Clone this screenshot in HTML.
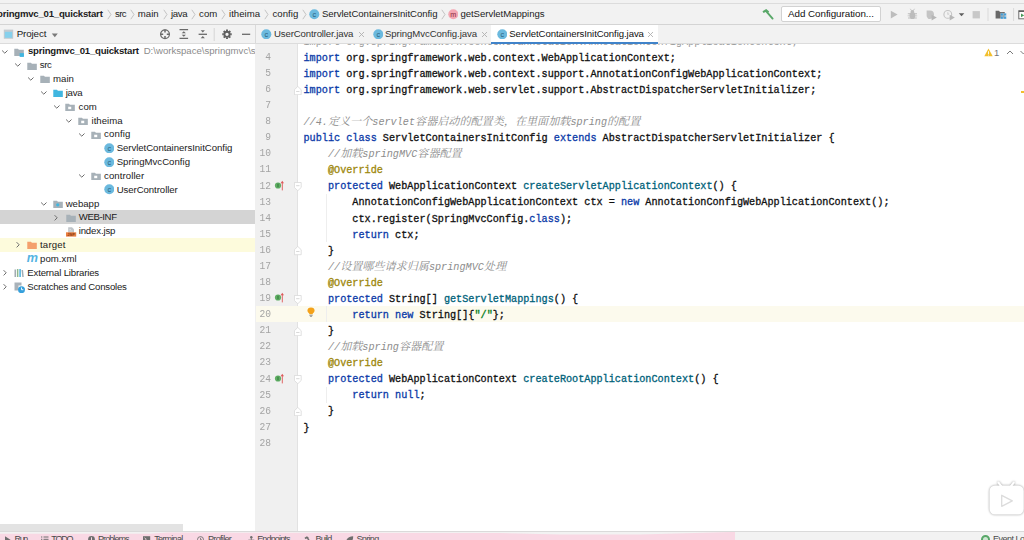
<!DOCTYPE html>
<html><head><meta charset="utf-8"><title>springmvc_01_quickstart</title>
<style>
*{box-sizing:border-box;margin:0;padding:0}
html,body{width:1024px;height:540px;overflow:hidden;background:#fff}
body{position:relative;font-family:"Liberation Sans","Noto Sans CJK SC",sans-serif;font-size:9.6px;color:#1a1a1a}
.abs{position:absolute}
.b{font-weight:bold}
.g{color:#8c8c8c}
#top0{left:0;top:0;width:1024px;height:4px;background:#f2f2f2;border-bottom:1px solid #dcdcdc;z-index:5}
#nav{left:0;top:4px;width:1024px;height:21px;background:#f2f2f2;border-bottom:1px solid #d4d4d4;z-index:5;overflow:hidden}
#nav span{position:absolute;top:0;line-height:20px;white-space:nowrap;font-size:9.6px;color:#222}
#nav .btn{background:#fff;border:1px solid #d2d2d2;border-radius:2px}
#nav span.btnt{color:#111;font-size:9.8px}
#tb{left:0;top:25px;width:1024px;height:19px;background:#f2f2f2;z-index:5;overflow:hidden}
#tb span{position:absolute;top:0;line-height:18px;white-space:nowrap}
#tb span.tab{color:#333;font-size:9.6px}
#left{left:0;top:44px;width:255px;height:487px;background:#fff}
.row{position:absolute;left:0;width:255px;height:13.9px;line-height:14px;white-space:nowrap;overflow:hidden}
.row span{position:absolute;top:0}
#gutter{left:255px;top:44px;width:43px;height:487px;background:#f0f0f0;border-right:1px solid #e2e2e2}
#codebg{left:298px;top:44px;width:726px;height:487px;background:#fff}
#codewrap{left:0;top:0;width:1024px;height:531px;overflow:hidden}
.ln{position:absolute;left:255px;width:16px;text-align:right;font-family:"Liberation Mono",monospace;font-size:9.6px;line-height:16px;height:16px;color:#a4a4a4;transform:scaleY(1.12);transform-origin:50% 55%}
.cl{position:absolute;left:303.5px;font-family:"Liberation Mono","Noto Serif CJK SC",monospace;font-size:10.18px;line-height:16px;height:16px;white-space:pre;color:#111;-webkit-text-stroke:0.3px}
.l3,.l3 .k{color:#9a9a9a;-webkit-text-stroke:0}
.k{color:#0b3aa8}.a{color:#9e880d}.m{color:#00627a}.s{color:#067d17}
.c{color:#8c8c8c;font-style:italic;-webkit-text-stroke:0}
.cj{font-family:"Noto Serif CJK SC",serif;font-size:11.1px;line-height:0}
#status{left:0;top:531px;width:1024px;height:9px;background:#f2f2f2;overflow:hidden;border-top:1px solid #dadada;z-index:6}
#status .pink{position:absolute;left:0;top:0;width:735px;height:9px;background:#f9d8e4;clip-path:polygon(0 1.800px,150px 1.800px,168px 0.600px,500px 0.900px,560px 2.600px,640px 2.600px,731px 0,735px 0,735px 9px,0 9px)}
#status span{position:absolute;top:1.0px;font-size:9px;line-height:12px;color:#4a4a4a;white-space:nowrap}
</style></head><body>
<div id="top0" class="abs"></div>
<div id="nav" class="abs"><span class="b" style="left:-8.1px;font-size:9.6px;letter-spacing:-0.218px;">springmvc_01_quickstart</span><svg class="abs" style="left:106.5px;top:5px" width="5" height="11" viewBox="0 0 5 11"><path d="M0.8 0.8 L4 5.5 L0.8 10.2" fill="none" stroke="#b8b8b8" stroke-width="0.8"/></svg><span class="" style="left:115.0px;font-size:9.6px;letter-spacing:-0.566px;">src</span><svg class="abs" style="left:129.5px;top:5px" width="5" height="11" viewBox="0 0 5 11"><path d="M0.8 0.8 L4 5.5 L0.8 10.2" fill="none" stroke="#b8b8b8" stroke-width="0.8"/></svg><span class="" style="left:137.8px;font-size:9.6px;letter-spacing:0.026px;">main</span><svg class="abs" style="left:162.5px;top:5px" width="5" height="11" viewBox="0 0 5 11"><path d="M0.8 0.8 L4 5.5 L0.8 10.2" fill="none" stroke="#b8b8b8" stroke-width="0.8"/></svg><span class="" style="left:171.0px;font-size:9.6px;letter-spacing:-0.377px;">java</span><svg class="abs" style="left:191px;top:5px" width="5" height="11" viewBox="0 0 5 11"><path d="M0.8 0.8 L4 5.5 L0.8 10.2" fill="none" stroke="#b8b8b8" stroke-width="0.8"/></svg><span class="" style="left:199.1px;font-size:9.6px;letter-spacing:0.025px;">com</span><svg class="abs" style="left:221px;top:5px" width="5" height="11" viewBox="0 0 5 11"><path d="M0.8 0.8 L4 5.5 L0.8 10.2" fill="none" stroke="#b8b8b8" stroke-width="0.8"/></svg><span class="" style="left:229.0px;font-size:9.6px;letter-spacing:0.023px;">itheima</span><svg class="abs" style="left:264px;top:5px" width="5" height="11" viewBox="0 0 5 11"><path d="M0.8 0.8 L4 5.5 L0.8 10.2" fill="none" stroke="#b8b8b8" stroke-width="0.8"/></svg><span class="" style="left:272.4px;font-size:9.6px;letter-spacing:0.082px;">config</span><svg class="abs" style="left:301.5px;top:5px" width="5" height="11" viewBox="0 0 5 11"><path d="M0.8 0.8 L4 5.5 L0.8 10.2" fill="none" stroke="#b8b8b8" stroke-width="0.8"/></svg><svg class="abs" style="left:309.3px;top:5.0px" width="10.6" height="10.6" viewBox="0 0 11 11"><circle cx="5.5" cy="5.5" r="5.2" fill="#6bb9de"/><text x="5.5" y="8" font-family="Liberation Sans,sans-serif" font-size="7.5" text-anchor="middle" fill="#2a5f7a">c</text></svg><span class="" style="left:321.9px;font-size:9.6px;letter-spacing:-0.044px;">ServletContainersInitConfig</span><svg class="abs" style="left:441.2px;top:5px" width="5" height="11" viewBox="0 0 5 11"><path d="M0.8 0.8 L4 5.5 L0.8 10.2" fill="none" stroke="#b8b8b8" stroke-width="0.8"/></svg><svg class="abs" style="left:447.7px;top:5.0px" width="10.6" height="10.6" viewBox="0 0 11 11"><circle cx="5.5" cy="5.5" r="5.2" fill="#f4a6b2"/><text x="5.5" y="8" font-family="Liberation Sans,sans-serif" font-size="7.5" text-anchor="middle" fill="#8a2a3a">m</text></svg><span class="" style="left:460.4px;font-size:9.6px;letter-spacing:-0.039px;">getServletMappings</span><svg class="abs" style="left:761px;top:4px" width="14" height="13" viewBox="0 0 14 13"><path d="M1.5 3.2 L5.2 1 L8.2 3.6 L6.3 5.6 L4.6 4.1 L2.6 5 Z" fill="#59a869"/><path d="M6.4 4.6 L11.6 10.6" stroke="#59a869" stroke-width="1.9" stroke-linecap="round"/></svg><div class="abs btn" style="left:781px;top:2px;width:100px;height:16px"></div><span class="btnt" style="left:788.0px;font-size:9.8px;letter-spacing:-0.035px;">Add Configuration...</span><svg class="abs" style="left:888px;top:4px" width="136" height="14" viewBox="0 0 136 14"><path d="M2.800 2.700 L9.600 6.600 L2.800 10.500 Z" fill="#bdbdbd"/><g fill="#bdbdbd"><ellipse cx="24.400" cy="7.400" rx="2.900" ry="3.600"/><circle cx="24.400" cy="3.600" r="1.700"/><path d="M19.800 5.300h9.200v.9h-9.200zM19.600 7.400h9.600v.9h-9.600zM20 9.600h8.800v.9h-8.800z"/><path d="M22.300 0.800l1.300 2M26.500 0.800l-1.300 2" stroke="#bdbdbd" stroke-width="0.800" fill="none"/></g><g><path d="M38.600 2.600h3.400c2.600 0 4 1.600 4 4s-1.400 4.400-4 4.400h-1.400c-1.200-0.800-2-2.200-2-3.400z" fill="#c4c4c4"/><path d="M43.600 6.800 L48.800 9.600 L43.600 12.400Z" fill="#b6b6b6"/></g><g><circle cx="59.800" cy="6.400" r="3.900" fill="none" stroke="#c4c4c4" stroke-width="1.100"/><path d="M59.800 4.200v2.400l1.400-1" stroke="#c4c4c4" fill="none" stroke-width="0.800"/><path d="M61.700 6.800 L66.800 9.600 L61.700 12.400Z" fill="#b6b6b6"/></g><path d="M70.800 5.200 L76.300 5.200 L73.550 8.300Z" fill="#5e5e5e"/><rect x="84.600" y="3.100" width="7.300" height="7.300" fill="#c8c8c8"/><path d="M100 0v13" stroke="#dadada" stroke-width="1"/><path d="M107.600 2.800h3.400l1 1.200h4.800v6.400h-9.200z" fill="#686868"/><path d="M112.600 5.200h2.600v2.600h-2.600zM115.700 5.200h2.600v2.600h-2.600zM112.600 8.300h2.600v2.600h-2.600zM115.700 8.300h2.600v2.600h-2.600z" fill="#3d9ad6" stroke="#f2f2f2" stroke-width="0.300"/><path d="M125.600 0v13" stroke="#dadada" stroke-width="1"/><rect x="130.800" y="2.800" width="9" height="8" fill="#fff" stroke="#6c6c6c" stroke-width="1"/><path d="M130.800 3.300h9" stroke="#5e5e5e" stroke-width="1.400"/><path d="M133 5.600 L136.200 7.400 L133 9.200Z" fill="#4a9a5a"/></svg></div>
<div id="tb" class="abs"><svg class="abs" style="left:3px;top:3.5px" width="11" height="11" viewBox="0 0 11 11"><rect x="0.8" y="0.6" width="9.4" height="9.2" fill="#c3cad0"/><rect x="1.8" y="2.800" width="7.4" height="6" fill="#86d0ec"/></svg><span class="" style="left:16.7px;font-size:9.8px;letter-spacing:-0.129px;color:#222">Project</span><svg class="abs" style="left:51px;top:7.5px" width="8" height="5" viewBox="0 0 8 5"><path d="M0.8 0.6h6L3.8 4.2z" fill="#7a7a7a"/></svg><svg class="abs" style="left:159px;top:3px" width="100" height="13" viewBox="0 0 100 13" fill="none" stroke="#6a6a6a" stroke-width="1.2"><circle cx="6" cy="6.300" r="4.400"/><path d="M6 1.500v3M6 8.100v3M1.200 6.300h3M7.800 6.300h3" stroke-width="1.500"/><path d="M20.500 1.700h8.600M20.500 10.300h8.600" stroke-width="1.300"/><path d="M24.800 3.200l2.100 2.100h-4.200zM24.800 8.800l2.100-2.100h-4.200z" fill="#6a6a6a" stroke="none"/><path d="M39.600 6.300h8.400" stroke-width="1.300"/><path d="M43.800 4.600l2.100-2.300h-4.200zM43.800 8l2.100 2.300h-4.200z" fill="#6a6a6a" stroke="none"/><path d="M55.200 0v13" stroke="#d6d6d6" stroke-width="1"/><g transform="translate(68 6.300)"><circle r="2.600" stroke-width="1.900" stroke="#5e5e5e"/><g stroke-width="1.900" stroke="#5e5e5e"><path d="M0 -4.700v1.500M0 4.700v-1.500M-4.700 0h1.500M4.700 0h-1.500M-3.300 -3.300l1.050 1.050M3.300 3.300l-1.050 -1.050M-3.300 3.300l1.050 -1.050M3.300 -3.300l-1.050 1.050"/></g></g><path d="M83 6.300h8.200" stroke-width="1.300"/></svg><div class="abs" style="left:255px;top:0;width:1px;height:19px;background:#dadada"></div><svg class="abs" style="left:261px;top:3.5px" width="10.6" height="10.6" viewBox="0 0 11 11"><circle cx="5.5" cy="5.5" r="5.2" fill="#6bb9de"/><text x="5.5" y="8" font-family="Liberation Sans,sans-serif" font-size="7.5" text-anchor="middle" fill="#2a5f7a">c</text></svg><span class="tab" style="left:274.0px;font-size:9.6px;letter-spacing:-0.121px;">UserController.java</span><svg class="abs" style="left:357.7px;top:6px" width="7" height="7" viewBox="0 0 7 7"><path d="M1 1l5 5M6 1l-5 5" stroke="#b0b0b0" stroke-width="0.9"/></svg><svg class="abs" style="left:372.7px;top:3.5px" width="10.6" height="10.6" viewBox="0 0 11 11"><circle cx="5.5" cy="5.5" r="5.2" fill="#6bb9de"/><text x="5.5" y="8" font-family="Liberation Sans,sans-serif" font-size="7.5" text-anchor="middle" fill="#2a5f7a">c</text></svg><span class="tab" style="left:385.0px;font-size:9.6px;letter-spacing:-0.066px;">SpringMvcConfig.java</span><svg class="abs" style="left:481.2px;top:6px" width="7" height="7" viewBox="0 0 7 7"><path d="M1 1l5 5M6 1l-5 5" stroke="#b0b0b0" stroke-width="0.9"/></svg><div class="abs" style="left:0;top:18.300px;width:1024px;height:0.700px;background:#dcdcdc"></div><div class="abs" style="left:490.6px;top:0;width:167.600px;height:19px;background:#fff;border-bottom:2.400px solid #4083c9"></div><svg class="abs" style="left:496.5px;top:3.5px" width="10.6" height="10.6" viewBox="0 0 11 11"><circle cx="5.5" cy="5.5" r="5.2" fill="#6bb9de"/><text x="5.5" y="8" font-family="Liberation Sans,sans-serif" font-size="7.5" text-anchor="middle" fill="#2a5f7a">c</text></svg><span class="tab" style="left:509.3px;font-size:9.6px;letter-spacing:-0.077px;color:#111">ServletContainersInitConfig.java</span><svg class="abs" style="left:647.4px;top:6px" width="7" height="7" viewBox="0 0 7 7"><path d="M1 1l5 5M6 1l-5 5" stroke="#b0b0b0" stroke-width="0.9"/></svg></div>
<div id="left" class="abs"></div>
<div class="row" style="top:44.40px"><svg class="abs" style="left:0.8px;top:3.2px" width="8" height="8" viewBox="0 0 8 8"><path d="M1.1 2.500 L3.800 5.200 L6.500 2.500" fill="none" stroke="#6c6c6c" stroke-width="1"/></svg><svg class="abs" style="left:14.0px;top:2.3px" width="10.4" height="10.4" viewBox="0 0 11 11"><path d="M0.3 1.800h3.900l1 1.200h5.200v6.400h-10.100z" fill="#a7b1b8"/><rect x="6" y="6.5" width="4.5" height="4" fill="#40b6e0"/></svg><span class="b" style="left:28.0px;font-size:9.6px;letter-spacing:-0.218px;">springmvc_01_quickstart</span><span class="g" style="left:143.7px;font-size:9.6px;letter-spacing:0.001px;">D:\workspace\springmvc\s</span></div><div class="row" style="top:58.23px"><svg class="abs" style="left:14px;top:3.2px" width="8" height="8" viewBox="0 0 8 8"><path d="M1.1 2.500 L3.800 5.200 L6.500 2.500" fill="none" stroke="#6c6c6c" stroke-width="1"/></svg><svg class="abs" style="left:26.5px;top:2.3px" width="10.4" height="10.4" viewBox="0 0 11 11"><path d="M0.3 1.800h3.900l1 1.200h5.200v6.400h-10.100z" fill="#a7b1b8"/></svg><span class="" style="left:39.8px;font-size:9.6px;letter-spacing:-0.332px;">src</span></div><div class="row" style="top:72.07px"><svg class="abs" style="left:26.5px;top:3.2px" width="8" height="8" viewBox="0 0 8 8"><path d="M1.1 2.500 L3.800 5.200 L6.500 2.500" fill="none" stroke="#6c6c6c" stroke-width="1"/></svg><svg class="abs" style="left:39.5px;top:2.3px" width="10.4" height="10.4" viewBox="0 0 11 11"><path d="M0.3 1.800h3.900l1 1.200h5.200v6.400h-10.100z" fill="#a7b1b8"/></svg><span class="" style="left:53.0px;font-size:9.6px;letter-spacing:0.026px;">main</span></div><div class="row" style="top:85.91px"><svg class="abs" style="left:39.5px;top:3.2px" width="8" height="8" viewBox="0 0 8 8"><path d="M1.1 2.500 L3.800 5.200 L6.500 2.500" fill="none" stroke="#6c6c6c" stroke-width="1"/></svg><svg class="abs" style="left:52.5px;top:2.3px" width="10.4" height="10.4" viewBox="0 0 11 11"><path d="M0.3 1.800h3.900l1 1.200h5.200v6.400h-10.100z" fill="#40b6e0"/></svg><span class="" style="left:65.7px;font-size:9.6px;letter-spacing:-0.227px;">java</span></div><div class="row" style="top:99.74px"><svg class="abs" style="left:52.5px;top:3.2px" width="8" height="8" viewBox="0 0 8 8"><path d="M1.1 2.500 L3.800 5.200 L6.500 2.500" fill="none" stroke="#6c6c6c" stroke-width="1"/></svg><svg class="abs" style="left:65.0px;top:2.3px" width="10.4" height="10.4" viewBox="0 0 11 11"><path d="M0.3 1.800h3.900l1 1.200h5.200v6.400h-10.100z" fill="#a7b1b8"/><rect x="3.4" y="5" width="3.2" height="2.6" fill="#fff"/></svg><span class="" style="left:78.6px;font-size:9.6px;letter-spacing:0.025px;">com</span></div><div class="row" style="top:113.58px"><svg class="abs" style="left:65px;top:3.2px" width="8" height="8" viewBox="0 0 8 8"><path d="M1.1 2.500 L3.800 5.200 L6.500 2.500" fill="none" stroke="#6c6c6c" stroke-width="1"/></svg><svg class="abs" style="left:78.0px;top:2.3px" width="10.4" height="10.4" viewBox="0 0 11 11"><path d="M0.3 1.800h3.900l1 1.200h5.200v6.400h-10.100z" fill="#a7b1b8"/><rect x="3.4" y="5" width="3.2" height="2.6" fill="#fff"/></svg><span class="" style="left:91.5px;font-size:9.6px;letter-spacing:0.023px;">itheima</span></div><div class="row" style="top:127.41px"><svg class="abs" style="left:78px;top:3.2px" width="8" height="8" viewBox="0 0 8 8"><path d="M1.1 2.500 L3.800 5.200 L6.500 2.500" fill="none" stroke="#6c6c6c" stroke-width="1"/></svg><svg class="abs" style="left:91.0px;top:2.3px" width="10.4" height="10.4" viewBox="0 0 11 11"><path d="M0.3 1.800h3.900l1 1.200h5.200v6.400h-10.100z" fill="#a7b1b8"/><rect x="3.4" y="5" width="3.2" height="2.6" fill="#fff"/></svg><span class="" style="left:104.0px;font-size:9.6px;letter-spacing:0.148px;">config</span></div><div class="row" style="top:141.25px"><svg class="abs" style="left:103.5px;top:1.5px" width="10.6" height="10.6" viewBox="0 0 11 11"><circle cx="5.5" cy="5.5" r="5.2" fill="#6bb9de"/><text x="5.5" y="8" font-family="Liberation Sans,sans-serif" font-size="7.5" text-anchor="middle" fill="#2a5f7a">c</text></svg><span class="" style="left:116.7px;font-size:9.6px;letter-spacing:-0.044px;">ServletContainersInitConfig</span></div><div class="row" style="top:155.08px"><svg class="abs" style="left:103.5px;top:1.5px" width="10.6" height="10.6" viewBox="0 0 11 11"><circle cx="5.5" cy="5.5" r="5.2" fill="#6bb9de"/><text x="5.5" y="8" font-family="Liberation Sans,sans-serif" font-size="7.5" text-anchor="middle" fill="#2a5f7a">c</text></svg><span class="" style="left:116.7px;font-size:9.6px;letter-spacing:0.016px;">SpringMvcConfig</span></div><div class="row" style="top:168.92px"><svg class="abs" style="left:78px;top:3.2px" width="8" height="8" viewBox="0 0 8 8"><path d="M1.1 2.500 L3.800 5.200 L6.500 2.500" fill="none" stroke="#6c6c6c" stroke-width="1"/></svg><svg class="abs" style="left:91.0px;top:2.3px" width="10.4" height="10.4" viewBox="0 0 11 11"><path d="M0.3 1.800h3.900l1 1.200h5.200v6.400h-10.100z" fill="#a7b1b8"/><rect x="3.4" y="5" width="3.2" height="2.6" fill="#fff"/></svg><span class="" style="left:104.0px;font-size:9.6px;letter-spacing:0.083px;">controller</span></div><div class="row" style="top:182.75px"><svg class="abs" style="left:103.5px;top:1.5px" width="10.6" height="10.6" viewBox="0 0 11 11"><circle cx="5.5" cy="5.5" r="5.2" fill="#6bb9de"/><text x="5.5" y="8" font-family="Liberation Sans,sans-serif" font-size="7.5" text-anchor="middle" fill="#2a5f7a">c</text></svg><span class="" style="left:116.7px;font-size:9.6px;letter-spacing:-0.061px;">UserController</span></div><div class="row" style="top:196.59px"><svg class="abs" style="left:39.5px;top:3.2px" width="8" height="8" viewBox="0 0 8 8"><path d="M1.1 2.500 L3.800 5.200 L6.500 2.500" fill="none" stroke="#6c6c6c" stroke-width="1"/></svg><svg class="abs" style="left:52.5px;top:2.3px" width="10.4" height="10.4" viewBox="0 0 11 11"><path d="M0.3 1.800h3.900l1 1.200h5.200v6.400h-10.100z" fill="#a7b1b8"/><circle cx="5" cy="6.2" r="1.7" fill="#40b6e0"/></svg><span class="" style="left:65.7px;font-size:9.6px;letter-spacing:-0.002px;">webapp</span></div><div class="row" style="top:210.42px;background:#d4d4d4"><svg class="abs" style="left:51.5px;top:3.2px" width="8" height="8" viewBox="0 0 8 8"><path d="M2.600 1.200 L5.200 3.800 L2.600 6.400" fill="none" stroke="#6c6c6c" stroke-width="1"/></svg><svg class="abs" style="left:65.9px;top:2.3px" width="10.4" height="10.4" viewBox="0 0 11 11"><path d="M0.3 1.800h3.900l1 1.200h5.200v6.400h-10.100z" fill="#a7b1b8"/></svg><span class="" style="left:78.7px;font-size:9.6px;letter-spacing:-0.359px;">WEB-INF</span></div><div class="row" style="top:224.26px"><svg class="abs" style="left:66px;top:1px" width="11" height="12" viewBox="0 0 11 12"><path d="M2.200 2.200h3.800l2 2v4h-5.800z" fill="#c0c5c9"/><path d="M3.400 4.500h1.600M3.400 6h3" stroke="#e4e6e8" stroke-width="0.700"/><rect x="0" y="7.300" width="10.200" height="4.300" fill="#e87f42"/><text x="5.100" y="10.900" font-size="4" font-weight="bold" font-family="Liberation Sans,sans-serif" text-anchor="middle" fill="#8a3a14">JSP</text></svg><span class="" style="left:78.7px;font-size:9.6px;letter-spacing:-0.142px;">index.jsp</span></div><div class="row" style="top:238.09px;background:#fdfbdc"><svg class="abs" style="left:14px;top:3.2px" width="8" height="8" viewBox="0 0 8 8"><path d="M2.600 1.200 L5.200 3.800 L2.600 6.400" fill="none" stroke="#6c6c6c" stroke-width="1"/></svg><svg class="abs" style="left:26.5px;top:2.3px" width="10.4" height="10.4" viewBox="0 0 11 11"><path d="M0.3 1.800h3.900l1 1.200h5.200v6.400h-10.100z" fill="#f4a06c"/></svg><span class="" style="left:40.0px;font-size:9.6px;letter-spacing:0.192px;">target</span></div><div class="row" style="top:251.93px"><span style="left:26.800px;top:-1.200px;color:#55b4e2;font-style:italic;font-size:12.6px;letter-spacing:-0.5px;font-family:'Liberation Sans',sans-serif;font-weight:bold">m</span><span class="" style="left:40.0px;font-size:9.6px;letter-spacing:0.064px;">pom.xml</span></div><div class="row" style="top:265.76px"><svg class="abs" style="left:1px;top:3.2px" width="8" height="8" viewBox="0 0 8 8"><path d="M2.600 1.200 L5.200 3.800 L2.600 6.400" fill="none" stroke="#6c6c6c" stroke-width="1"/></svg><svg class="abs" style="left:14px;top:2.5px" width="11" height="10" viewBox="0 0 11 10"><rect x="0.500" y="1.500" width="1.500" height="7.500" fill="#a2acb3"/><rect x="2.900" y="1" width="1.500" height="8" fill="#8fb98f"/><rect x="5.300" y="1" width="1.600" height="8" fill="#56b6e2"/><rect x="7.900" y="2" width="1.500" height="7" fill="#a2acb3" transform="rotate(-6 8.600 5.500)"/></svg><span class="" style="left:27.3px;font-size:9.6px;letter-spacing:-0.164px;">External Libraries</span></div><div class="row" style="top:279.60px"><svg class="abs" style="left:1px;top:3.2px" width="8" height="8" viewBox="0 0 8 8"><path d="M2.600 1.200 L5.200 3.800 L2.600 6.400" fill="none" stroke="#6c6c6c" stroke-width="1"/></svg><svg class="abs" style="left:14px;top:2px" width="12" height="12" viewBox="0 0 12 12"><path d="M0.500 0.500h7v3h-3v5h-4z" fill="#a9b2b9"/><circle cx="7.500" cy="7.700" r="3.500" fill="#35a0dc"/><path d="M7.5 5.500v2.2h1.8" stroke="#fff" stroke-width="0.9" fill="none"/></svg><span class="" style="left:27.3px;font-size:9.6px;letter-spacing:-0.209px;">Scratches and Consoles</span></div>
<div class="abs" style="left:0;top:524px;width:183px;height:7px;background:#e3e3e3"></div>
<div id="gutter" class="abs"></div>
<div id="codebg" class="abs"></div>
<div id="codewrap" class="abs"><div class="abs" style="left:256px;top:305.78px;width:768px;height:16.5px;background:#fcfaed"></div><div class="abs" style="left:325.5px;top:193.71999999999997px;width:1px;height:48.239999999999995px;background:#eeeeee"></div><div class="abs" style="left:325.5px;top:306.28px;width:1px;height:16.08px;background:#eeeeee"></div><div class="abs" style="left:325.5px;top:386.67999999999995px;width:1px;height:16.08px;background:#eeeeee"></div><div class="ln" style="top:33.82px">3</div><div class="cl l3" style="top:34.620000000000005px"><span class="k">import</span> org.springframework.context.annotation.AnnotationConfigApplicationContext;</div><div class="ln" style="top:49.9px">4</div><div class="cl" style="top:50.7px"><span class="k">import</span> org.springframework.web.context.WebApplicationContext;</div><div class="ln" style="top:65.98px">5</div><div class="cl" style="top:66.78px"><span class="k">import</span> org.springframework.web.context.support.AnnotationConfigWebApplicationContext;</div><div class="ln" style="top:82.06px">6</div><div class="cl" style="top:82.86px"><span class="k">import</span> org.springframework.web.servlet.support.AbstractDispatcherServletInitializer;</div><div class="ln" style="top:98.14px">7</div><div class="ln" style="top:114.22px">8</div><div class="cl" style="top:115.02px"><span class="c">//4.<span class="cj">定义一个</span>servlet<span class="cj">容器启动的配置类，在里面加载</span>spring<span class="cj">的配置</span></span></div><div class="ln" style="top:130.29999999999998px">9</div><div class="cl" style="top:131.09999999999997px"><span class="k">public class</span> ServletContainersInitConfig <span class="k">extends</span> AbstractDispatcherServletInitializer {</div><div class="ln" style="top:146.38px">10</div><div class="cl" style="top:147.17999999999998px">    <span class="c">//<span class="cj">加载</span>springMVC<span class="cj">容器配置</span></span></div><div class="ln" style="top:162.46px">11</div><div class="cl" style="top:163.26px">    <span class="a">@Override</span></div><div class="ln" style="top:178.54px">12</div><div class="cl" style="top:179.33999999999997px">    <span class="k">protected</span> WebApplicationContext <span class="m">createServletApplicationContext</span>() {</div><div class="ln" style="top:194.61999999999998px">13</div><div class="cl" style="top:195.41999999999996px">        AnnotationConfigWebApplicationContext ctx = <span class="k">new</span> AnnotationConfigWebApplicationContext();</div><div class="ln" style="top:210.7px">14</div><div class="cl" style="top:211.49999999999997px">        ctx.register(SpringMvcConfig.<span class="k">class</span>);</div><div class="ln" style="top:226.78px">15</div><div class="cl" style="top:227.57999999999998px">        <span class="k">return</span> ctx;</div><div class="ln" style="top:242.85999999999999px">16</div><div class="cl" style="top:243.65999999999997px">    }</div><div class="ln" style="top:258.93999999999994px">17</div><div class="cl" style="top:259.73999999999995px">    <span class="c">//<span class="cj">设置哪些请求归属</span>springMVC<span class="cj">处理</span></span></div><div class="ln" style="top:275.02px">18</div><div class="cl" style="top:275.82px">    <span class="a">@Override</span></div><div class="ln" style="top:291.09999999999997px">19</div><div class="cl" style="top:291.9px">    <span class="k">protected</span> String[] <span class="m">getServletMappings</span>() {</div><div class="ln" style="top:307.17999999999995px">20</div><div class="cl" style="top:307.97999999999996px">        <span class="k">return new</span> String[]{<span class="s">"/"</span>};</div><div class="ln" style="top:323.25999999999993px">21</div><div class="cl" style="top:324.05999999999995px">    }</div><div class="ln" style="top:339.3399999999999px">22</div><div class="cl" style="top:340.13999999999993px">    <span class="c">//<span class="cj">加载</span>spring<span class="cj">容器配置</span></span></div><div class="ln" style="top:355.41999999999996px">23</div><div class="cl" style="top:356.21999999999997px">    <span class="a">@Override</span></div><div class="ln" style="top:371.49999999999994px">24</div><div class="cl" style="top:372.29999999999995px">    <span class="k">protected</span> WebApplicationContext <span class="m">createRootApplicationContext</span>() {</div><div class="ln" style="top:387.5799999999999px">25</div><div class="cl" style="top:388.37999999999994px">        <span class="k">return null</span>;</div><div class="ln" style="top:403.65999999999997px">26</div><div class="cl" style="top:404.46px">    }</div><div class="ln" style="top:419.73999999999995px">27</div><div class="cl" style="top:420.53999999999996px">}</div><div class="ln" style="top:435.81999999999994px">28</div><svg class="abs" style="left:274px;top:179.83999999999997px" width="13" height="11" viewBox="0 0 13 11"><circle cx="4" cy="5.500" r="3.100" fill="#5fae64"/><rect x="3.400" y="3.700" width="1.200" height="3.600" fill="#3b7f42"/><path d="M8.300 10.400V2.500" stroke="#e06666" stroke-width="1"/><path d="M6.600 3.200L8.300 0.800L10 3.200z" fill="#dc5a5a"/></svg><svg class="abs" style="left:294.2px;top:182.04px" width="7.6" height="9.2" viewBox="0 0 9 10" preserveAspectRatio="none"><path d="M0.5 0.5h8v5.500l-4 3.5l-4-3.500z" fill="#fff" stroke="#d8d8d8" stroke-width="0.9"/><path d="M2.500 4h4" stroke="#cfcfcf" stroke-width="0.900"/></svg><svg class="abs" style="left:274px;top:292.4px" width="13" height="11" viewBox="0 0 13 11"><circle cx="4" cy="5.500" r="3.100" fill="#5fae64"/><rect x="3.400" y="3.700" width="1.200" height="3.600" fill="#3b7f42"/><path d="M8.300 10.400V2.500" stroke="#e06666" stroke-width="1"/><path d="M6.600 3.200L8.300 0.800L10 3.200z" fill="#dc5a5a"/></svg><svg class="abs" style="left:294.2px;top:294.59999999999997px" width="7.6" height="9.2" viewBox="0 0 9 10" preserveAspectRatio="none"><path d="M0.5 0.5h8v5.500l-4 3.5l-4-3.500z" fill="#fff" stroke="#d8d8d8" stroke-width="0.9"/><path d="M2.500 4h4" stroke="#cfcfcf" stroke-width="0.900"/></svg><svg class="abs" style="left:274px;top:372.79999999999995px" width="13" height="11" viewBox="0 0 13 11"><circle cx="4" cy="5.500" r="3.100" fill="#5fae64"/><rect x="3.400" y="3.700" width="1.200" height="3.600" fill="#3b7f42"/><path d="M8.300 10.400V2.500" stroke="#e06666" stroke-width="1"/><path d="M6.600 3.200L8.300 0.800L10 3.200z" fill="#dc5a5a"/></svg><svg class="abs" style="left:294.2px;top:374.99999999999994px" width="7.6" height="9.2" viewBox="0 0 9 10" preserveAspectRatio="none"><path d="M0.5 0.5h8v5.500l-4 3.5l-4-3.500z" fill="#fff" stroke="#d8d8d8" stroke-width="0.9"/><path d="M2.500 4h4" stroke="#cfcfcf" stroke-width="0.900"/></svg><svg class="abs" style="left:294.2px;top:246.35999999999999px" width="7.6" height="9.2" viewBox="0 0 9 10" preserveAspectRatio="none"><path d="M0.5 9.500h8v-5.5l-4-3.5l-4 3.5z" fill="#fff" stroke="#d8d8d8" stroke-width="0.9"/><path d="M2.500 6h4" stroke="#cfcfcf" stroke-width="0.900"/></svg><svg class="abs" style="left:294.2px;top:326.75999999999993px" width="7.6" height="9.2" viewBox="0 0 9 10" preserveAspectRatio="none"><path d="M0.5 9.500h8v-5.5l-4-3.5l-4 3.5z" fill="#fff" stroke="#d8d8d8" stroke-width="0.9"/><path d="M2.500 6h4" stroke="#cfcfcf" stroke-width="0.900"/></svg><svg class="abs" style="left:294.2px;top:407.15999999999997px" width="7.6" height="9.2" viewBox="0 0 9 10" preserveAspectRatio="none"><path d="M0.5 9.500h8v-5.5l-4-3.5l-4 3.5z" fill="#fff" stroke="#d8d8d8" stroke-width="0.9"/><path d="M2.500 6h4" stroke="#cfcfcf" stroke-width="0.900"/></svg><svg class="abs" style="left:294.2px;top:85.56px" width="7.6" height="9.2" viewBox="0 0 9 10" preserveAspectRatio="none"><path d="M0.5 9.500h8v-5.5l-4-3.5l-4 3.5z" fill="#fff" stroke="#d8d8d8" stroke-width="0.9"/><path d="M2.500 6h4" stroke="#cfcfcf" stroke-width="0.900"/></svg><svg class="abs" style="left:307.3px;top:306.88px" width="8" height="10.2" viewBox="0.800 0 8.400 12" preserveAspectRatio="none"><circle cx="5" cy="4.2" r="3.7" fill="#f4a21a"/><path d="M3.200 6.5h3.600v2h-3.600z" fill="#f4a21a"/><path d="M3.3 9.2h3.4v1h-3.400zM3.9 10.600h2.2v0.800h-2.2z" fill="#8f8f8f"/></svg><svg class="abs" style="left:984px;top:48px" width="9" height="9" viewBox="0 0 9 9"><path d="M4.5 0.5L8.700 8.300H0.3z" fill="#f2bf2c"/><path d="M4.500 3.200v2.800" stroke="#fff" stroke-width="0.9"/><rect x="4.05" y="6.6" width="0.900" height="0.900" fill="#fff"/></svg><span class="abs" style="left:994px;top:47px;font-size:9.5px;color:#777;line-height:11px">1</span><svg class="abs" style="left:1005.5px;top:49px" width="20" height="7" viewBox="0 0 20 7" fill="none" stroke="#7a7a7a" stroke-width="1"><path d="M1 5L4 2L7 5M14.5 2L17.5 5L20.5 2"/></svg><div class="abs" style="left:1021px;top:90.5px;width:3px;height:2px;background:#f2bf2c"></div><svg class="abs" style="left:984px;top:478px;filter:drop-shadow(0 0.400px 0.900px rgba(0,0,0,0.420))" width="44" height="42" viewBox="984 478 44 42" fill="none"><path d="M998.500 482.600l2.600 3.600M1013.700 482.600l-2.600 3.600" stroke="#fff" stroke-width="2.200" stroke-linecap="round"/><rect x="989.500" y="485.400" width="34.200" height="29.200" rx="5.500" fill="#fff"/><path d="M1001.700 495.300v11l10.600-5.500z" stroke="#dcdcdc" stroke-width="1.300" stroke-linejoin="round" fill="#fff"/></svg></div>
<div id="mask" class="abs"></div>
<div id="status" class="abs"><div class="pink"></div><svg class="abs" style="left:4px;top:4.2px" width="9" height="9" viewBox="0 0 9 9"><path d="M1 0.3L6.5 3.800L1 7.300z" fill="#6e6e6e"/></svg><svg class="abs" style="left:41px;top:4.2px" width="9" height="9" viewBox="0 0 9 9"><path d="M0 1h1.300M2.5 1h5M0 3.300h1.300M2.5 3.300h5M0 5.600h1.300M2.5 5.600h5" stroke="#6e6e6e" stroke-width="1"/></svg><svg class="abs" style="left:88.2px;top:4.2px" width="9" height="9" viewBox="0 0 9 9"><circle cx="3.500" cy="3.500" r="3.400" fill="#6e6e6e"/><path d="M3.500 1.300v2.800" stroke="#f9d8e4" stroke-width="1"/></svg><svg class="abs" style="left:143px;top:4.2px" width="9" height="9" viewBox="0 0 9 9"><rect x="0" y="0.200" width="7.200" height="6.600" fill="#6e6e6e"/><path d="M1.500 1.800l1.800 1.500l-1.800 1.500" stroke="#f9d8e4" stroke-width="0.800" fill="none"/></svg><svg class="abs" style="left:197px;top:4.2px" width="9" height="9" viewBox="0 0 9 9"><circle cx="3.500" cy="3.600" r="3" fill="none" stroke="#6e6e6e" stroke-width="0.900"/><path d="M3.500 1.800v2h1.600" stroke="#6e6e6e" stroke-width="0.800" fill="none"/></svg><svg class="abs" style="left:246.5px;top:4.2px" width="9" height="9" viewBox="0 0 9 9"><circle cx="4.300" cy="1.300" r="1.200" fill="#6e6e6e"/><path d="M4.300 2v2M1.300 6.500v-2.400h6v2.400" stroke="#6e6e6e" stroke-width="0.800" fill="none"/><circle cx="1.300" cy="6.500" r="1.100" fill="#6e6e6e"/><circle cx="7.300" cy="6.500" r="1.100" fill="#6e6e6e"/></svg><svg class="abs" style="left:304px;top:4.2px" width="9" height="9" viewBox="0 0 9 9"><path d="M0.500 1.800L3 0.200L5 2L3.800 3.300L2.800 2.400L1.300 3z" fill="#6e6e6e"/><path d="M3.800 2.800L7 6.500" stroke="#6e6e6e" stroke-width="1.300"/></svg><svg class="abs" style="left:346px;top:4.2px" width="9" height="9" viewBox="0 0 9 9"><path d="M0.300 4.500C1 1.500 4 0.500 7.200 0.200C7.200 4 6 6.500 2.500 6.500C1.500 6.500 0.800 6 0.300 4.500z" fill="#6e6e6e"/></svg><span class="" style="left:14.5px;font-size:9.0px;letter-spacing:-1.339px;">Run</span><span class="" style="left:51.2px;font-size:9.0px;letter-spacing:-1.136px;">TODO</span><span class="" style="left:98.0px;font-size:9.0px;letter-spacing:-0.914px;">Problems</span><span class="" style="left:154.2px;font-size:9.0px;letter-spacing:-0.714px;">Terminal</span><span class="" style="left:208.0px;font-size:9.0px;letter-spacing:-0.664px;">Profiler</span><span class="" style="left:257.2px;font-size:9.0px;letter-spacing:-0.837px;">Endpoints</span><span class="" style="left:315.5px;font-size:9.0px;letter-spacing:-0.803px;">Build</span><span class="" style="left:356.5px;font-size:9.0px;letter-spacing:-0.669px;">Spring</span><span class="" style="left:993.0px;font-size:9.0px;letter-spacing:-0.503px;">Event Log</span><div class="abs" style="left:980.8px;top:3px;width:9.700px;height:9.700px;border-radius:4.900px;background:#cfe6d3;border:2px solid #59a869"></div></div>
</body></html>
